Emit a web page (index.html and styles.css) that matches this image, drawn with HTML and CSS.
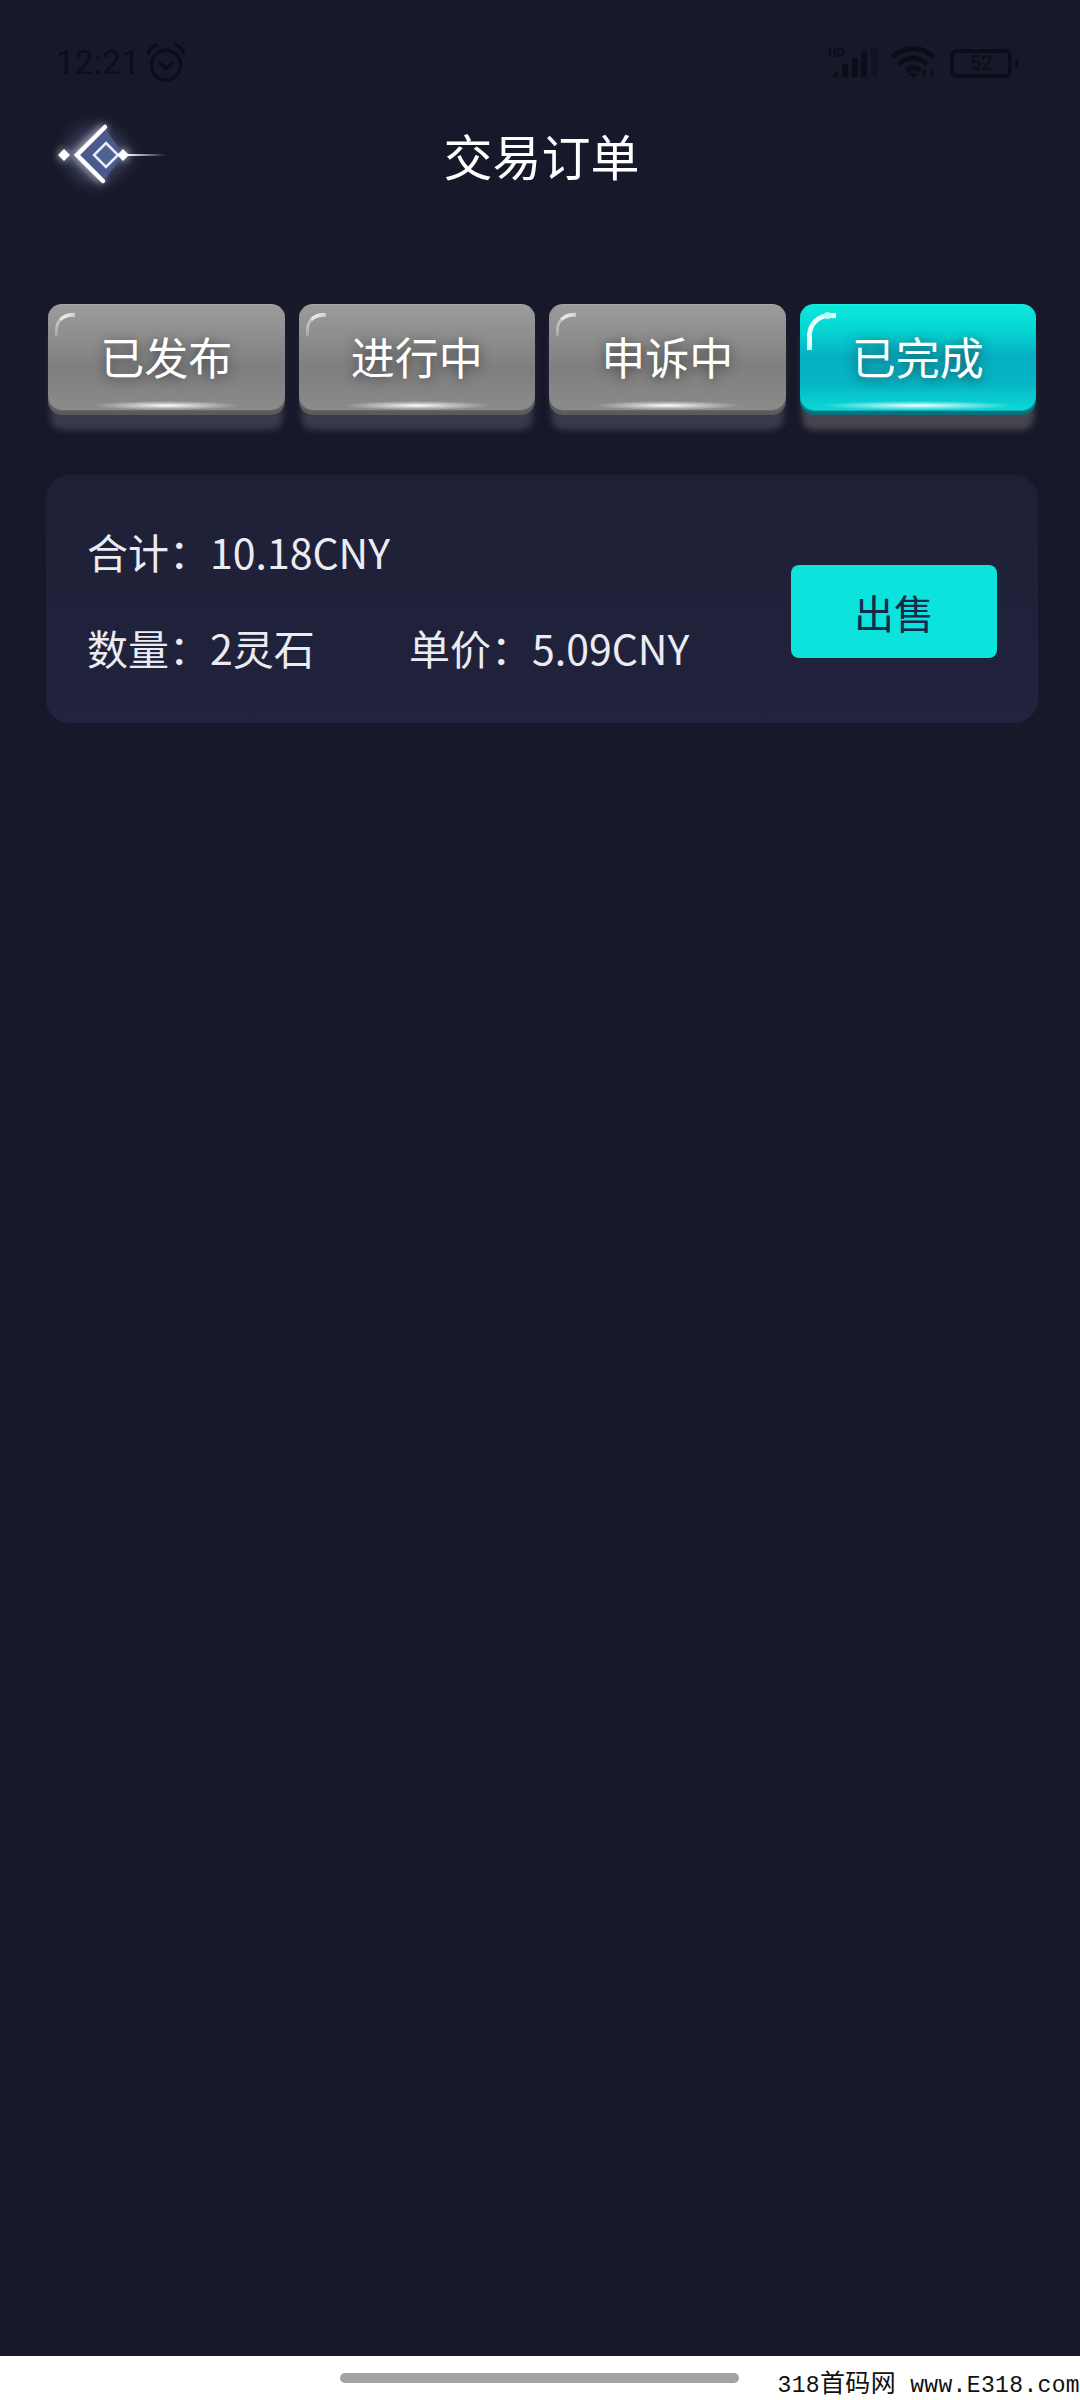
FILE: index.html
```html
<!DOCTYPE html>
<html lang="zh">
<head>
<meta charset="utf-8">
<title>交易订单</title>
<link rel="stylesheet" href="styles.css">
</head>
<body>
<main class="screen">
  <div class="status">
    <div class="status-left">
      <span class="clock">12:21</span>
      <svg class="alarm" width="40" height="40" viewBox="0 0 38 38" fill="none" stroke="#0b0d18" stroke-width="3" stroke-linecap="round" stroke-linejoin="round">
        <circle cx="19" cy="21" r="14"/>
        <path d="M13 19l6 5 6-5"/>
        <path d="M2 10Q4 4 10 2M36 10Q34 4 28 2"/>
      </svg>
    </div>
    <div class="status-right">
      <svg class="signal" width="50" height="32" viewBox="0 0 50 32" fill="#0b0d18">
        <text class="hd" x="0" y="10">HD</text>
        <path d="M3 30l7-7v7zM14 30V17h6v13zM24 30V11h6v19zM33 30V4h6v26z"/>
        <path d="M43 30V1h7v29z" opacity=".4"/>
      </svg>
      <svg class="wifi" width="48" height="34" viewBox="0 0 48 34" fill="none" stroke="#0b0d18" stroke-width="5">
        <path d="M2 11Q23-6 44 11"/>
        <path d="M9 18Q23 6 37 18"/>
        <path d="M16 25Q23 18 30 25"/>
        <path d="M18 27h10l-5 5z" fill="#0b0d18" stroke="none"/>
        <path d="M34 32v-7M33 27l2-3M42 24v8" stroke-width="2.5"/>
      </svg>
      <div class="battery"><span class="battery-box">52</span><span class="battery-nub"></span></div>
    </div>
  </div>

  <header class="topbar">
    <svg class="back" width="150" height="90" viewBox="0 0 150 90">
      <defs>
        <filter id="glow-wide" x="-60%" y="-60%" width="220%" height="220%"><feGaussianBlur stdDeviation="9"/></filter>
        <filter id="glow-near" x="-40%" y="-40%" width="180%" height="180%"><feGaussianBlur stdDeviation="4"/></filter>
        <linearGradient id="tail" x1="0" x2="1" y1="0" y2="0">
          <stop offset="0" stop-color="#fff"/>
          <stop offset="1" stop-color="#fff" stop-opacity="0"/>
        </linearGradient>
      </defs>
      <path d="M40 20L66 18 92 45 66 72 40 70 24 45z" fill="#7d8cc0" opacity=".42" filter="url(#glow-wide)"/>
      <path d="M86 45h45" stroke="#c8d2f0" stroke-width="7" opacity=".35" filter="url(#glow-near)"/>
      <g filter="url(#glow-near)" opacity=".8">
        <path d="M65 17L37 45 63 71" fill="none" stroke="#fff" stroke-width="6"/>
        <path d="M24 39l6 6-6 6-6-6zM83 39l6 6-6 6-6-6z" fill="#fff"/>
      </g>
      <path d="M64 17L37 45 63 71 84 45z" fill="#4a5a8c"/>
      <path d="M24 39l6 6-6 6-6-6z" fill="#fff"/>
      <path d="M65 17L37 45 63 71" fill="none" stroke="#fff" stroke-width="4.5" stroke-linecap="round"/>
      <path d="M66 33l12 12-12 12-12-12z" fill="#50628f" stroke="#e8ecf8" stroke-width="2.5"/>
      <path d="M83 39l6 6-6 6-6-6z" fill="#fff"/>
      <path d="M86 44h40v2H86z" fill="url(#tail)"/>
    </svg>
    <h1 class="title">交易订单</h1>
    <div></div>
  </header>

  <nav class="tabs">
    <div class="tab"><span class="tab-label">已发布</span></div>
    <div class="tab"><span class="tab-label">进行中</span></div>
    <div class="tab"><span class="tab-label">申诉中</span></div>
    <div class="tab tab-active"><i class="tab-dot"></i><span class="tab-label">已完成</span></div>
  </nav>

  <section class="card">
    <div class="info">
      <div class="row">合计：10.18CNY</div>
      <div class="row row-pair"><span>数量：2灵石</span><span>单价：5.09CNY</span></div>
    </div>
    <button class="sell">出售</button>
  </section>
</main>
<footer class="navbar">
  <span class="handle"></span>
  <span class="mark">318<span class="mark-cjk">首码网</span> www.E318.com</span>
</footer>
</body>
</html>
```
FILE: styles.css
```css
* { box-sizing: border-box; }
html, body { margin: 0; padding: 0; }
body {
  width: 1080px;
  height: 2400px;
  display: flex;
  flex-direction: column;
  background: #fff;
  font-family: "Noto Sans CJK SC", "Noto Sans", sans-serif;
}
.screen {
  flex: 1;
  background: #171829;
  display: flex;
  flex-direction: column;
}

/* status bar */
.status {
  height: 110px;
  padding: 43px 62px 0 56px;
  display: flex;
  justify-content: space-between;
  align-items: flex-start;
}
.status-left { display: flex; align-items: center; gap: 6px; }
.clock {
  font: 33px/38px Roboto, sans-serif;
  color: #0b0d18;
  letter-spacing: .4px;
}
.status-right { display: flex; align-items: center; gap: 12px; padding-top: 3px; }
.hd { font: bold 12px Roboto, sans-serif; }
.battery { display: flex; align-items: center; gap: 3px; }
.battery-box {
  width: 62px;
  height: 29px;
  border: 4px solid #0b0d18;
  border-radius: 7px;
  font: 20px/21px Roboto, sans-serif;
  color: #0b0d18;
  text-align: center;
}
.battery-nub { width: 3px; height: 9px; background: #0b0d18; border-radius: 2px; }

/* header */
.topbar {
  height: 90px;
  padding-left: 40px;
  display: grid;
  grid-template-columns: 150px 1fr 187px;
  align-items: center;
}
.title {
  margin: 0;
  text-align: center;
  font-size: 49px;
  font-weight: 400;
  line-height: 90px;
  color: #fff;
}

/* tabs */
.tabs {
  margin: 104px 44px 0 48px;
  display: grid;
  grid-template-columns: repeat(4, 1fr);
  gap: 14px;
}
.tab {
  position: relative;
  height: 106px;
  border-radius: 14px;
  border-top: 1px solid #a8a8a8;
  background: linear-gradient(180deg, #9b9b9b 0%, #8e8e8e 30%, #7f7f7f 60%, #8b8b8b 100%);
  box-shadow: 0 1px 0 #6a6a6a, 0 5px 0 #5b5b5b, 0 22px 6px -2px #383a4e;
  display: flex;
  align-items: center;
  justify-content: center;
}
.tab::before {
  content: "";
  position: absolute;
  left: 7px;
  top: 8px;
  width: 17px;
  height: 19px;
  border-left: 3px solid rgba(255, 255, 255, .4);
  border-top: 4px solid rgba(255, 255, 255, .75);
  border-radius: 16px 0 0 0;
  -webkit-mask-image: linear-gradient(135deg, #000 35%, transparent 80%);
  mask-image: linear-gradient(135deg, #000 35%, transparent 80%);
}
.tab::after {
  content: "";
  position: absolute;
  left: 45px;
  right: 45px;
  bottom: 0;
  height: 9px;
  background: radial-gradient(ellipse 50% 50% at 50% 50%, #fff 0%, rgba(255, 255, 255, .5) 45%, rgba(255, 255, 255, 0) 100%);
}
.tab-label {
  font-size: 44px;
  line-height: 60px;
  color: #fff;
  padding-bottom: 4px;
  text-shadow: 0 2px 12px rgba(40, 40, 40, .75);
}
.tab-active {
  border-top-color: #14efe0;
  background: linear-gradient(180deg, #0ce9dd 0%, #05d4d2 25%, #05aec4 50%, #06b6c6 75%, #0ad9d6 100%);
  box-shadow: 0 1px 0 #0ab5bd, 0 5px 0 #0b6f7c, 0 22px 6px -2px #46454f;
}
.tab-active::before {
  left: 7px;
  top: 8px;
  border-left: 5px solid #e6fffc;
  border-top: 5px solid #e6fffc;
  width: 24px;
  height: 32px;
  border-radius: 22px 0 0 0;
  -webkit-mask-image: linear-gradient(135deg, #000 55%, transparent 85%);
  mask-image: linear-gradient(135deg, #000 55%, transparent 85%);
}
.tab-active::after { left: 20px; right: 20px; }
.tab-dot {
  position: absolute;
  left: 24px;
  top: 7px;
  width: 7px;
  height: 7px;
  border-radius: 50%;
  background: #bdf8f4;
}

/* order card */
.card {
  margin: 65px 42px 0 46px;
  height: 248px;
  padding: 46px 41px 65px 41px;
  border-radius: 24px;
  background: linear-gradient(180deg, #1e2035 0%, #21233f 100%);
  display: flex;
  justify-content: space-between;
}
.info { display: flex; flex-direction: column; gap: 36px; }
.row {
  font-size: 41px;
  line-height: 60px;
  color: #ebebf2;
}
.row-pair {
  display: grid;
  grid-template-columns: 322px auto;
}
.sell {
  align-self: flex-end;
  width: 206px;
  height: 93px;
  border: 0;
  border-radius: 8px;
  background: #0ce3dc;
  color: #15294a;
  font-family: inherit;
  font-size: 40px;
  padding: 0;
}

/* navigation strip */
.navbar {
  height: 44px;
  background: #fff;
  position: relative;
}
.handle {
  position: absolute;
  left: 340px;
  top: 17px;
  width: 399px;
  height: 10px;
  border-radius: 5px;
  background: #a3a3a3;
}
.mark {
  position: absolute;
  right: 0;
  bottom: 0;
  font: 23px/28px "Liberation Mono", "Noto Sans CJK SC", monospace;
  letter-spacing: .35px;
  color: #111;
  white-space: pre;
}
.mark-cjk { font: 25px/28px "Noto Sans CJK SC", sans-serif; }
```
